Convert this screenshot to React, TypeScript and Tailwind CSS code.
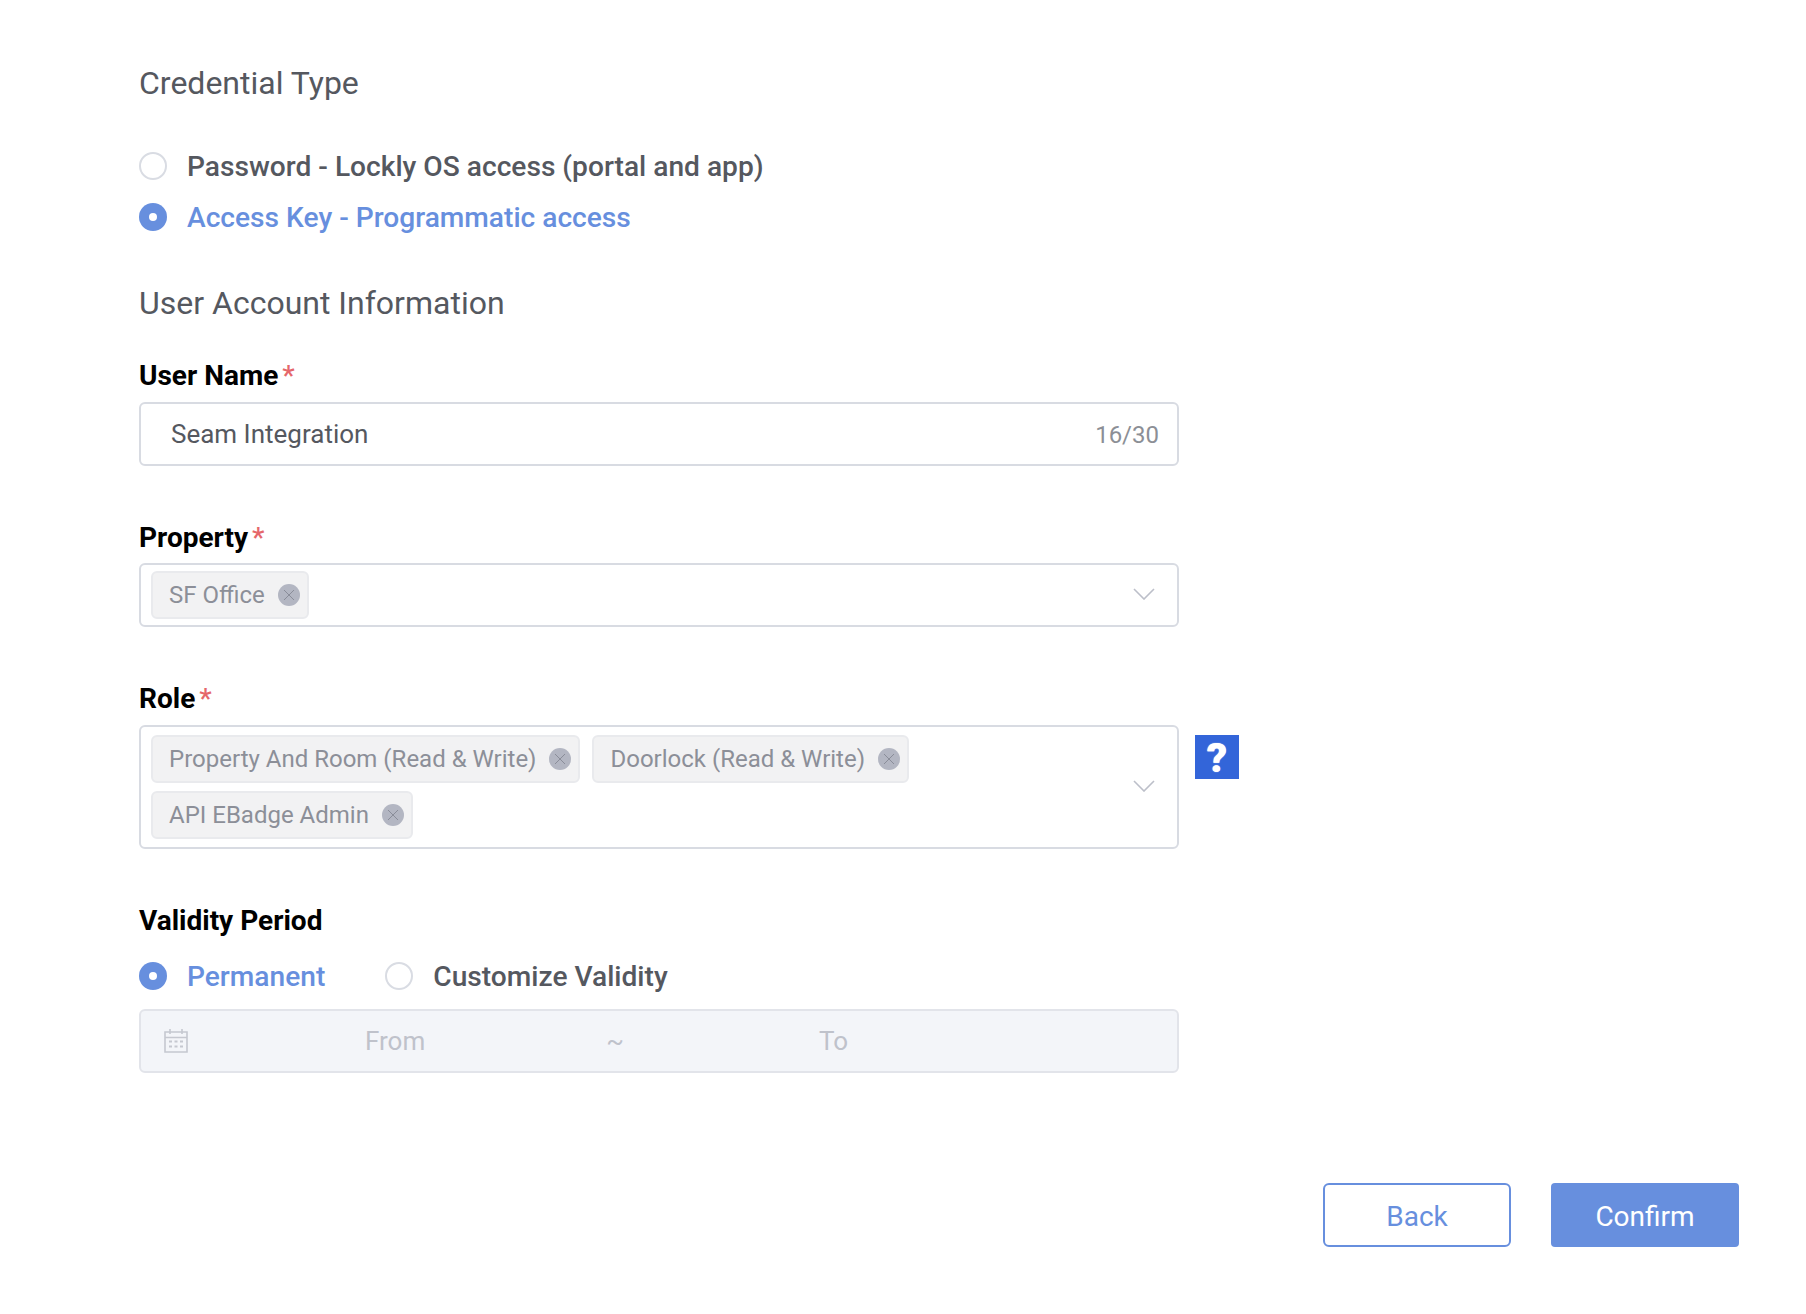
const Radio = ({ label, checked, className = "" }: { label: string; checked?: boolean; className?: string }) => (
  <label className={`flex items-center gap-[20px] h-[28px] ${className}`}>
    {checked ? (
      <span className="flex h-[28px] w-[28px] items-center justify-center rounded-full bg-[#678fde]">
        <span className="h-[8px] w-[8px] rounded-full bg-white" />
      </span>
    ) : (
      <span className="h-[28px] w-[28px] rounded-full border-2 border-[#d9dce3] bg-white" />
    )}
    <span className={`pt-[2px] text-[28.15px] font-medium leading-[28px] ${checked ? "text-[#678fde]" : "text-[#55585f]"}`}>{label}</span>
  </label>
);

const FieldLabel = ({ text, required, className = "" }: { text: string; required?: boolean; className?: string }) => (
  <div className={`flex h-[32px] items-center pt-[2px] text-[28px] font-bold leading-[30px] text-black ${className}`}>
    {text}
    {required && <span className="ml-[4px] font-medium text-[#e5676b]">*</span>}
  </div>
);

const Chevron = () => (
  <svg width="22" height="12" viewBox="0 0 22 12" fill="none" className="mb-[2px] shrink-0">
    <path d="M1 1l10 10L21 1" stroke="#bcbfc9" strokeWidth="1.6" />
  </svg>
);

const Chip = ({ label }: { label: string }) => (
  <span className="flex h-[48px] items-center rounded-[6px] border-2 border-[#e9eaed] bg-[#f2f2f3] pl-[16px] pr-[7px] text-[24px] leading-[30px] text-[#8c8f98]">
    {label}
    <span className="ml-[13px] flex h-[22px] w-[22px] items-center justify-center rounded-full bg-[#b3b6c2]">
      <svg width="12" height="12" viewBox="0 0 12 12" fill="none">
        <path d="M1 1l10 10M11 1L1 11" stroke="#8a8d99" strokeWidth="1" />
      </svg>
    </span>
  </span>
);

const CalendarIcon = () => (
  <svg width="24" height="25" viewBox="0 0 24 25" fill="none" className="mb-[2px] shrink-0">
    <path d="M1 4h22v20H1zM1 9.5h22M6 1v5M18 1v5" stroke="#c5c8d0" strokeWidth="1.6" />
    <path d="M5 13.5h3M10.5 13.5h3M16 13.5h3M5 18.5h3M10.5 18.5h3M16 18.5h3" stroke="#c5c8d0" strokeWidth="2" />
  </svg>
);

export default function App() {
  return (
    <div className="min-h-[1314px] w-full bg-white pl-[139px] pr-[67px] pt-[63px] font-['Roboto',sans-serif]">
      <h2 className="text-[32px] font-normal leading-[40px] text-[#55585f]">Credential Type</h2>
      <Radio className="mt-[49px]" label="Password - Lockly OS access (portal and app)" />
      <Radio className="mt-[23px]" checked label="Access Key - Programmatic access" />

      <h2 className="mt-[52px] text-[32px] font-normal leading-[40px] text-[#55585f]">User Account Information</h2>

      <FieldLabel className="mt-[36px]" text="User Name" required />
      <div className="mt-[11px] flex h-[64px] w-[1040px] items-center justify-between rounded-[6px] border-2 border-[#d8dbe2] pl-[30px] pr-[18px]">
        <span className="text-[26px] text-[#55585f]">Seam Integration</span>
        <span className="pt-[2px] text-[24px] text-[#8c8f96]">16/30</span>
      </div>

      <FieldLabel className="mt-[55px]" text="Property" required />
      <div className="mt-[10px] flex h-[64px] w-[1040px] items-center justify-between rounded-[6px] border-2 border-[#d8dbe2] pl-[10px] pr-[22px]">
        <Chip label="SF Office" />
        <Chevron />
      </div>

      <FieldLabel className="mt-[55px]" text="Role" required />
      <div className="mt-[11px] flex items-start gap-[16px]">
        <div className="flex h-[124px] w-[1040px] items-center justify-between rounded-[6px] border-2 border-[#d8dbe2] pl-[10px] pr-[22px]">
          <div className="flex flex-wrap gap-x-[12px] gap-y-[8px]">
            <Chip label="Property And Room (Read & Write)" />
            <Chip label="Doorlock (Read & Write)" />
            <div className="basis-full">
              <div className="inline-flex">
                <Chip label="API EBadge Admin" />
              </div>
            </div>
          </div>
          <Chevron />
        </div>
        <div className="mt-[10px] flex h-[44px] w-[44px] items-center justify-center bg-[#3365d9] pt-[4px] text-[40px] font-black leading-none text-white [text-shadow:0_0_1px_white]">?</div>
      </div>

      <FieldLabel className="mt-[55px]" text="Validity Period" />
      <div className="mt-[26px] flex items-center">
        <Radio checked label="Permanent" />
        <Radio className="ml-[60px]" label="Customize Validity" />
      </div>
      <div className="mt-[19px] flex h-[64px] w-[1040px] items-center rounded-[6px] border-2 border-[#e2e4ea] bg-[#f3f5f9] pl-[23px] text-[26px] text-[#bfc2cb]">
        <CalendarIcon />
        <span className="ml-[177px]">From</span>
        <span className="ml-[181px]">~</span>
        <span className="ml-[195px]">To</span>
      </div>

      <div className="mt-[110px] flex justify-end gap-[40px]">
        <button className="h-[64px] w-[188px] rounded-[6px] border-2 border-[#678fde] bg-white pt-[3px] text-[28px] text-[#678fde]">Back</button>
        <button className="h-[64px] w-[188px] rounded-[4px] bg-[#678fde] pt-[3px] text-[28px] text-white">Confirm</button>
      </div>
    </div>
  );
}
